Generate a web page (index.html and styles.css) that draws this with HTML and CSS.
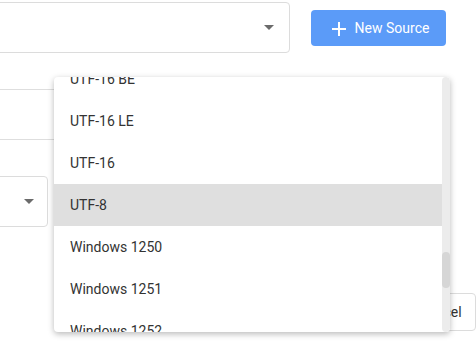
FILE: index.html
```html
<!DOCTYPE html>
<html>
<head>
	<meta charset="utf-8"/>
	<title>Sources</title>
	<link rel="stylesheet" href="styles.css">
</head>
<body>
	<div class="page">
		<div class="toolbar">
			<div class="select wide"><span class="caret"></span></div>
			<button class="primary">
				<svg width="14" height="14" viewBox="0 0 14 14"><path d="M7 0V14M0 7H14" stroke="#fff" stroke-width="2"/></svg>
				<span>New Source</span>
			</button>
		</div>
		<div class="fields">
			<div class="line first"></div>
			<div class="line"></div>
			<div class="select small"><span class="caret"></span></div>
		</div>
		<div class="footer">
			<button class="plain">Cancel</button>
		</div>
	</div>
	<div class="menu">
		<ul class="list">
			<li>UTF-16 BE</li>
			<li>UTF-16 LE</li>
			<li>UTF-16</li>
			<li class="active">UTF-8</li>
			<li>Windows 1250</li>
			<li>Windows 1251</li>
			<li>Windows 1252</li>
		</ul>
		<div class="track"><div class="thumb"></div></div>
	</div>
</body>
</html>
```

FILE: styles.css
```css
html, body{height: 100%;}
body{margin: 0;overflow: hidden;background: #fff;font-family: Roboto, "Liberation Sans", sans-serif;color: #333;}
.page{position: relative;height: 100%;}
.toolbar{display: flex;align-items: center;padding-top: 2px;}
.select{box-sizing: border-box;border: 1px solid #dcdcdc;border-radius: 4px;height: 51px;display: flex;align-items: center;justify-content: flex-end;}
.select.wide{width: 300px;margin-left: -10px;padding-right: 15px;}
.select.small{width: 60px;margin-left: -12px;padding-right: 13px;margin-top: 36px;}
.caret{width: 0;height: 0;border-left: 5px solid transparent;border-right: 5px solid transparent;border-top: 5px solid #6b6b6b;}
.primary{margin-left: 21px;width: 135px;height: 36px;border: none;border-radius: 4px;background: #5b9bf8;color: #fff;
	font-family: inherit;font-size: 14px;display: flex;align-items: center;justify-content: center;gap: 9px;padding: 0 0 0 4px;}
.primary svg{margin-top: 2px;}
.fields{display: flex;flex-direction: column;}
.line{width: 300px;height: 1px;background: #dedede;}
.line.first{margin-top: 36px;}
.line + .line{margin-top: 49px;}
.footer{display: flex;justify-content: flex-end;margin-top: 66px;}
.plain{box-sizing: border-box;height: 38px;width: 78px;border: 1px solid #dcdcdc;border-radius: 4px;background: #fff;
	font-family: inherit;font-size: 14px;color: #333;text-align: left;padding: 0 0 0 20px;}

.menu{position: absolute;left: 54px;top: 77px;width: 396px;height: 255px;overflow: hidden;background: #fff;
	border-radius: 4px;box-shadow: 0 2px 6px rgba(0,0,0,0.28);}
.list{list-style: none;margin: -19px 0 0 0;padding: 0;}
.list li{height: 42px;line-height: 42px;padding-left: 16px;font-size: 14px;color: #333;margin-right: 8px;}
.list li.active{background: #dfdfdf;}
.track{position: absolute;right: 0;top: 0;bottom: 0;width: 8px;background: #ececec;border-radius: 4px;}
.thumb{position: absolute;left: 0;right: 0;top: 175px;height: 36px;background: #d6d6d6;border-radius: 4px;}
```
